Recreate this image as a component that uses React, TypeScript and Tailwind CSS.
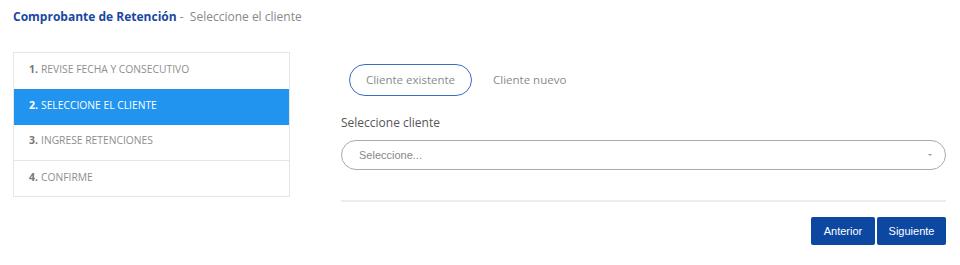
import React from "react";

const steps = [
  { n: "1.", t: "REVISE FECHA Y CONSECUTIVO" },
  { n: "2.", t: "SELECCIONE EL CLIENTE", active: true },
  { n: "3.", t: "INGRESE RETENCIONES" },
  { n: "4.", t: "CONFIRME" },
];

export default function App() {
  return (
    <div className="w-[960px] h-[265px] bg-white" style={{ fontFamily: "'Open Sans', sans-serif" }}>
      <div className="pl-[13px] pt-[8px] h-[52px] text-[12px] leading-[18px]">
        <span className="font-bold text-[#1a47a3]">Comprobante de Retención</span>
        <span className="text-[#888]"> -&nbsp; Seleccione el cliente</span>
      </div>
      <div className="flex pl-[13px]">
        <div className="w-[277px] border border-[#e6e6e6] h-[145px]">
          {steps.map((s, i) => (
            <div
              key={i}
              className={`flex items-center pb-[3px] pl-[15px] text-[10.3px] ${
                s.active ? "bg-[#2194f0] text-white" : "text-[#8e8e8e]"
              } ${i === 2 ? "border-b border-[#e6e6e6] h-[36px]" : "h-[36px]"}`}
            >
              <span className={`font-bold mr-[3px] text-[10.5px] ${s.active ? "text-white" : "text-[#777]"}`}>{s.n}</span>
              <span>{s.t}</span>
            </div>
          ))}
        </div>
        <div className="ml-[51px] w-[605px] pt-[12px]">
          <div className="flex items-center h-[32px]">
            <div className="ml-[8px] w-[123px] h-[32px] rounded-full border border-[#3d6bc2] flex items-center justify-center text-[11.5px] text-[#8a8a8a]">
              Cliente existente
            </div>
            <div className="ml-[21px] text-[11.5px] text-[#8a8a8a]">Cliente nuevo</div>
          </div>
          <div className="mt-[19px] text-[12px] text-[#555] leading-[16px]">Seleccione cliente</div>
          <div className="mt-[9px] h-[30px] w-[605px] rounded-full border border-[#aaa] flex items-center justify-between pl-[17px] pr-[12px]">
            <span className="text-[11px] text-[#888]" style={{ fontFamily: "'Liberation Sans', Arial, sans-serif" }}>Seleccione...</span>
            <svg width="6" height="4" viewBox="0 0 6 4"><path d="M1 1 L3 3 L5 1 Z" fill="#999" /></svg>
          </div>
          <div className="mt-[30px] h-[2px] bg-[#ededed]" />
          <div className="flex justify-end mt-[15px] gap-[2px]" style={{ fontFamily: "'Liberation Sans', Arial, sans-serif" }}>
            <button className="w-[64px] h-[28px] bg-[#0c47a1] text-white text-[11px] rounded-[2px]">Anterior</button>
            <button className="w-[69px] h-[28px] bg-[#0c47a1] text-white text-[11px] rounded-[2px]">Siguiente</button>
          </div>
        </div>
      </div>
    </div>
  );
}
